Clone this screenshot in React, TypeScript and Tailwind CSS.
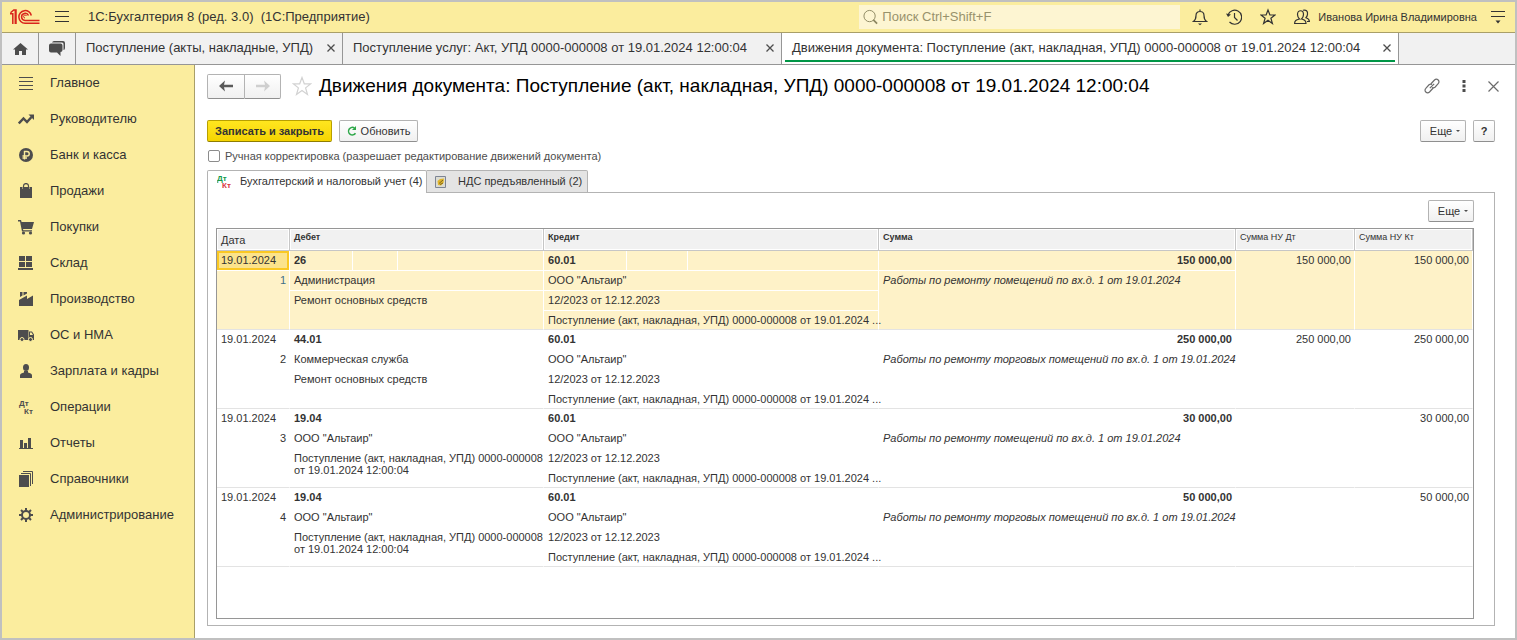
import { useState } from "react";
import type { ReactNode } from "react";
import clsx from "clsx";

type MenuItem = { label: string; icon: ReactNode };

const MENU: MenuItem[] = [
  {
    label: "Главное",
    icon: <path d="M1 2.500h14M1 6.500h14M1 10.500h14M1 14.500h14" stroke="#4d4d4d" />,
  },
  {
    label: "Руководителю",
    icon: (
      <>
        <path d="M.8 12.500 5.500 7.500 9 11 13.500 6" fill="none" stroke="#4d4d4d" strokeWidth="2.400" />
        <path d="M10.500 3.500H16V9z" />
      </>
    ),
  },
  {
    label: "Банк и касса",
    icon: (
      <>
        <circle cx="8" cy="8" r="7" />
        <path d="M6.500 12.500v-8H9a2.200 2.200 0 0 1 0 4.500H4.500M4.500 11H9" fill="none" stroke="#fbed9e" strokeWidth="1.400" />
      </>
    ),
  },
  {
    label: "Продажи",
    icon: (
      <>
        <path d="M2 4h2.500v2h1V4h5v2h1V4H14v11H2z" />
        <path d="M5.500 6V3C5.500-.3 10.500-.3 10.500 3V6" fill="none" stroke="#4d4d4d" strokeWidth="1.200" />
      </>
    ),
  },
  {
    label: "Покупки",
    icon: (
      <>
        <path d="M0 1h3l.6 2H16l-2 7H5l.3 1.200H14v1.300H4L2 2.500H0z" />
        <circle cx="5.500" cy="14" r="1.600" />
        <circle cx="12.500" cy="14" r="1.600" />
      </>
    ),
  },
  {
    label: "Склад",
    icon: <path d="M1 1h6v5H1zM8 1h6v5H8zM1 7h6v5H1zM8 7h6v5H8zM0 13h15v2H0z" />,
  },
  {
    label: "Производство",
    icon: <path d="M1 15V9l8-4.500V8l6-3.500V15zM2 1h2.500v3.500L2 6zM5.500 1H9v1.500L5.500 4.500z" />,
  },
  {
    label: "ОС и НМА",
    icon: (
      <>
        <path d="M0 3h10.500v10H0zM11 4.500h3l2 3V13h-5z" />
        <path d="M12 5.500h1.500L15 8h-3z" fill="#fbed9e" />
        <circle cx="4" cy="12.500" r="2" stroke="#fbed9e" />
        <circle cx="12.500" cy="12.500" r="2" stroke="#fbed9e" />
      </>
    ),
  },
  {
    label: "Зарплата и кадры",
    icon: (
      <>
        <ellipse cx="8" cy="4.500" rx="3" ry="3.500" />
        <path d="M2 15v-2.500C2 10.500 4 10 6 9.500V8h4v1.500c2 .5 4 1 4 3V15z" />
      </>
    ),
  },
  {
    label: "Операции",
    icon: (
      <g fontFamily="Liberation Sans, sans-serif" fontSize="8" fontWeight="700">
        <text x="1" y="7">Дт</text>
        <text x="6" y="15">Кт</text>
      </g>
    ),
  },
  {
    label: "Отчеты",
    icon: <path d="M2 5h3v8H2zM6 8h3v5H6zM10 3h3v10h-3zM1 13h14v1H1z" />,
  },
  {
    label: "Справочники",
    icon: (
      <>
        <path d="M1 4h10v12H1z" />
        <path d="M3 2.500h9.500V15M5 .5h9.500V13" fill="none" stroke="#4d4d4d" />
      </>
    ),
  },
  {
    label: "Администрирование",
    icon: (
      <>
        <circle cx="8" cy="8" r="4" fill="none" stroke="#4d4d4d" strokeWidth="2" />
        <path
          d="M8 1v3M8 12v3M1 8h3M12 8h3M3 3l2.200 2.200M10.800 10.800 13 13M13 3l-2.200 2.200M5.200 10.800 3 13"
          stroke="#4d4d4d"
          strokeWidth="2"
        />
      </>
    ),
  },
];

const DOCUMENT_TITLE =
  "Движения документа: Поступление (акт, накладная, УПД) 0000-000008 от 19.01.2024 12:00:04";

const WINDOW_TABS = [
  { title: "Поступление (акты, накладные, УПД)", width: "w-[267px]" },
  { title: "Поступление услуг: Акт, УПД 0000-000008 от 19.01.2024 12:00:04", width: "w-[439px]" },
  { title: DOCUMENT_TITLE, width: "w-[617px]" },
];

type Entry = {
  debit: string;
  debitLines: [string, string];
  amount: string;
  comment: string;
  taxDt: string;
};

const ENTRIES: Entry[] = [
  {
    debit: "26",
    debitLines: ["Администрация", "Ремонт основных средств"],
    amount: "150 000,00",
    comment: "Работы по ремонту помещений по вх.д. 1 от 19.01.2024",
    taxDt: "150 000,00",
  },
  {
    debit: "44.01",
    debitLines: ["Коммерческая служба", "Ремонт основных средств"],
    amount: "250 000,00",
    comment: "Работы по ремонту торговых помещений по вх.д. 1 от 19.01.2024",
    taxDt: "250 000,00",
  },
  {
    debit: "19.04",
    debitLines: ['ООО "Альтаир"', "Поступление (акт, накладная, УПД) 0000-000008\nот 19.01.2024 12:00:04"],
    amount: "30 000,00",
    comment: "Работы по ремонту помещений по вх.д. 1 от 19.01.2024",
    taxDt: "",
  },
  {
    debit: "19.04",
    debitLines: ['ООО "Альтаир"', "Поступление (акт, накладная, УПД) 0000-000008\nот 19.01.2024 12:00:04"],
    amount: "50 000,00",
    comment: "Работы по ремонту торговых помещений по вх.д. 1 от 19.01.2024",
    taxDt: "",
  },
];

const buttonClass =
  "flex h-[22px] items-center justify-center rounded-xs border border-[#b3b3b3] border-b-[#8f8f8f] bg-linear-to-b from-white to-[#f0f0f0] text-[11px] text-[#333]";

function Logo() {
  return (
    <svg width="30" height="16" viewBox="0 0 30 16" fill="none" stroke="#d9241c" strokeWidth="1.500" aria-label="1С">
      <path d="M0 4.800h2.800V15M0.500 3.800 3.800 1h2.200V15M5.300 1.500V15" />
      <path d="M21.300 6.500A6.300 6.300 0 1 0 15 14.200H29.500" />
      <path d="M18.500 6.500A3.600 3.600 0 1 0 15 11.500H29.500" />
      <path d="M16.500 7a1.500 1.500 0 1 0-1.500 2" strokeWidth="1" />
    </svg>
  );
}

function TopBar() {
  return (
    <header className="flex h-[31px] shrink-0 items-center border-b border-[#a99f68] bg-[#fbed9e] text-[#333]">
      <div className="flex flex-1 items-center pl-2">
        <Logo />
        <button type="button" aria-label="Меню" className="ml-[15px]">
          <svg width="14" height="12" viewBox="0 0 14 12" stroke="#333">
            <path d="M0 .5h14M0 5.500h14M0 10.500h14" />
          </svg>
        </button>
        <span className="ml-[19px] text-[13px] whitespace-pre">1С:Бухгалтерия 8 (ред. 3.0)  (1С:Предприятие)</span>
      </div>
      <label className="flex h-6 w-[321px] items-center gap-1 bg-[#fdf5d2] pl-1">
        <svg width="16" height="16" viewBox="0 0 16 16" fill="none" stroke="#8c8660">
          <circle cx="7" cy="7" r="6" />
          <path d="m11 11 4 4" strokeWidth="1.800" />
        </svg>
        <input
          type="text"
          aria-label="Поиск"
          placeholder="Поиск Ctrl+Shift+F"
          className="w-full bg-transparent text-[13px] outline-none placeholder:text-[#98926c]"
        />
      </label>
      <div className="flex items-center gap-[18px] pr-2 pl-3">
        <button type="button" aria-label="Уведомления">
          <svg width="16" height="18" viewBox="0 0 16 18" fill="none" stroke="#333" strokeWidth="1.200">
            <path d="M1.500 13.500c2-1.500 2.500-3 2.500-6C4 5 5.500 3.500 8 3.500S12 5 12 7.500c0 3 .5 4.500 2.500 6zM8 3.500V1.500" />
            <path d="M6 15.500h4L8 17.300z" fill="#333" stroke="none" />
          </svg>
        </button>
        <button type="button" aria-label="История">
          <svg width="16" height="18" viewBox="0 0 16 18" fill="none" stroke="#333" strokeWidth="1.200">
            <path d="M2 7A7 7 0 1 1 3.500 14M8.500 5v4.500l3 3" />
            <path d="M0 5.500 2 9l3-2.500z" fill="#333" stroke="none" />
          </svg>
        </button>
        <button type="button" aria-label="Избранное">
          <svg width="16" height="18" viewBox="0 0 16 18" fill="none" stroke="#333" strokeWidth="1.200">
            <path d="m8 2 1.900 5h5.100l-4.100 3.200 1.500 5.300L8 12.300l-4.400 3.200 1.500-5.300L1 7h5.100z" />
          </svg>
        </button>
        <button type="button" aria-label="Пользователь">
          <svg width="16" height="18" viewBox="0 0 16 18" fill="none" stroke="#333" strokeWidth="1.200">
            <path d="M.6 15.500c0-3 1.500-3.500 4.900-4.500C4 9.500 3.500 8 3.500 6.500c0-5 6-5 6 0 0 2-.5 3-2 4.500 2.900 1 4.500 1.500 4.500 4.500z" />
            <path d="M9 2.300c3-1 5 1 4.500 4-.2 1.500-.8 2.500-1.500 3.400 2.500.8 3.400 1.300 3.400 3.800H13" />
          </svg>
        </button>
      </div>
      <span className="text-[11px]">Иванова Ирина Владимировна</span>
      <button type="button" aria-label="Настройки" className="mr-[10px] ml-[14px]">
        <svg width="14" height="14" viewBox="0 0 14 14" stroke="#333">
          <path d="M0 1.500h14M0 6.500h14" />
          <path d="M4.500 10.500h5L7 13.500z" fill="#333" stroke="none" />
        </svg>
      </button>
    </header>
  );
}

function WindowTabs() {
  const [active, setActive] = useState(2);

  return (
    <nav className="flex h-8 shrink-0 border-b border-[#969696] bg-[#f1f1f1] text-[#333]">
      <button type="button" aria-label="Начальная страница" className="flex w-[37px] items-center justify-center border-r border-[#969696]">
        <svg width="15" height="12" viewBox="0 0 15 12" fill="#4d4d4d">
          <path d="M7.500 0 15 6.500h-2V12H9V8H6v4H2V6.500H0z" />
        </svg>
      </button>
      <button type="button" aria-label="Обсуждения" className="flex w-[37px] items-center justify-center border-r border-[#969696]">
        <svg width="16" height="15" viewBox="0 0 16 15" fill="#4d4d4d">
          <path d="M5 0h9q2 0 2 2v5q0 2-1.500 2V3q0-1.500-1.500-1.500H3Q3.500 0 5 0z" />
          <path d="M2 2.500h9.500q2 0 2 2v4.500q0 2-2 2v4L8 11.500H2q-2 0-2-2v-5q0-2 2-2z" />
        </svg>
      </button>
      {WINDOW_TABS.map((tab, i) => (
        <div
          key={tab.title}
          className={clsx("flex border-r border-[#969696] px-[3px]", tab.width, i === active && "bg-white")}
        >
          <div
            className={clsx(
              "mb-[2px] flex flex-1 items-center justify-between border-b-2 pt-[3px] pr-1 pl-[7px]",
              i === active ? "border-[#009646]" : "border-transparent",
            )}
          >
            <button type="button" className="text-[13px] whitespace-nowrap" onClick={() => setActive(i)}>
              {tab.title}
            </button>
            <button type="button" aria-label="Закрыть">
              <svg width="8" height="8" viewBox="0 0 8 8" stroke="#4d4d4d" strokeWidth="1.300">
                <path d="m.5.5 7 7M7.500.5l-7 7" />
              </svg>
            </button>
          </div>
        </div>
      ))}
    </nav>
  );
}

function Sidebar() {
  return (
    <aside className="w-[193px] shrink-0 border-r border-[#a99f68] bg-[#fbed9e]">
      <ul>
        {MENU.map((item) => (
          <li key={item.label}>
            <a href="#" className="flex h-9 items-center gap-4 pl-4 text-[13px] text-[#333]">
              <svg width="16" height="16" viewBox="0 0 16 16" fill="#4d4d4d">
                {item.icon}
              </svg>
              {item.label}
            </a>
          </li>
        ))}
      </ul>
    </aside>
  );
}

function MoreButton() {
  return (
    <button type="button" className={clsx(buttonClass, "w-[46px] gap-1 pl-1")}>
      Еще
      <svg width="4" height="2" viewBox="0 0 4 2" fill="#4d4d4d">
        <path d="M0 0h4L2 2z" />
      </svg>
    </button>
  );
}

function EntryRows({ entry, index, selected }: { entry: Entry; index: number; selected: boolean }) {
  const base = "border-r border-b px-1 pt-[3px] align-top leading-3 whitespace-pre";
  const cell = clsx(base, selected ? "border-white bg-[#fef2c8]" : "border-transparent");
  const current = clsx(base, "border-white bg-[#fbe38c] shadow-[inset_0_0_0_2px_#fac823]");
  const last = clsx(cell, "border-b-[#e3e3e3]");
  const right = clsx(last, "pr-[3px] text-right");

  return (
    <tbody>
      <tr className="h-5">
        <td className={selected ? current : cell}>19.01.2024</td>
        <td className={clsx(cell, "font-bold")}>{entry.debit}</td>
        <td className={cell} />
        <td className={cell} />
        <td className={clsx(cell, "font-bold")}>60.01</td>
        <td className={cell} />
        <td className={cell} />
        <td className={clsx(cell, "pr-[3px] text-right font-bold")}>{entry.amount}</td>
        <td rowSpan={4} className={right}>{entry.taxDt}</td>
        <td rowSpan={4} className={right}>{entry.amount}</td>
      </tr>
      <tr className="h-5">
        <td rowSpan={3} className={clsx(right, selected && "text-[#3f6f86]")}>{index}</td>
        <td colSpan={3} className={cell}>{entry.debitLines[0]}</td>
        <td colSpan={3} className={cell}>ООО "Альтаир"</td>
        <td rowSpan={3} className={clsx(last, "italic")}>{entry.comment}</td>
      </tr>
      <tr className="h-5">
        <td rowSpan={2} colSpan={3} className={last}>{entry.debitLines[1]}</td>
        <td colSpan={3} className={cell}>12/2023 от 12.12.2023</td>
      </tr>
      <tr className="h-[19px]">
        <td colSpan={3} className={last}>Поступление (акт, накладная, УПД) 0000-000008 от 19.01.2024 ...</td>
      </tr>
    </tbody>
  );
}

function EntriesTable() {
  const th =
    "border-r border-b border-[#c6c6c6] bg-[#f1f1f1] px-1 pt-[2px] text-left align-top text-[9px] leading-3 shadow-[inset_0_0_0_1px_#fff]";

  return (
    <div className="flex-1 border border-[#969696] bg-white">
      <table className="w-full table-fixed border-separate border-spacing-0 text-[11px] text-[#333]">
        <colgroup>
          <col className="w-[73px]" />
          <col className="w-[63px]" />
          <col className="w-[45px]" />
          <col className="w-[146px]" />
          <col className="w-[83px]" />
          <col className="w-[61px]" />
          <col className="w-[191px]" />
          <col />
          <col className="w-[119px]" />
          <col className="w-[118px]" />
        </colgroup>
        <thead>
          <tr className="h-[22px]">
            <th className="border-r border-b border-[#c6c6c6] bg-[#f1f1f1] px-1 text-left text-[11px] leading-3 font-normal shadow-[inset_0_0_0_1px_#fff]">
              Дата
            </th>
            <th colSpan={3} className={th}>Дебет</th>
            <th colSpan={3} className={th}>Кредит</th>
            <th className={th}>Сумма</th>
            <th className={clsx(th, "font-normal")}>Сумма НУ Дт</th>
            <th className={clsx(th, "font-normal")}>Сумма НУ Кт</th>
          </tr>
        </thead>
        {ENTRIES.map((entry, i) => (
          <EntryRows key={i} entry={entry} index={i + 1} selected={i === 0} />
        ))}
      </table>
    </div>
  );
}

function DocumentHeader() {
  return (
    <div className="flex h-6 items-center">
      <div className="flex">
        <button type="button" aria-label="Назад" className={clsx(buttonClass, "h-[25px] w-[38px] rounded-r-none")}>
          <svg width="14" height="12" viewBox="0 0 14 12" fill="#5a5a5a">
            <path d="m0 6 6-5.500L5 4.700h9v2.600H5l1 4.200z" />
          </svg>
        </button>
        <button type="button" aria-label="Вперед" className={clsx(buttonClass, "h-[25px] w-9 rounded-l-none border-l-0")}>
          <svg width="14" height="12" viewBox="0 0 14 12" fill="#cfcfcf">
            <path d="M14 6 8 .5l1 4.200H0v2.600h9l-1 4.200z" />
          </svg>
        </button>
      </div>
      <button type="button" aria-label="В избранное" className="mr-[7px] ml-[11px]">
        <svg width="20" height="20" viewBox="0 0 20 20" fill="none" stroke="#d2d2d2" strokeWidth="1.200">
          <path d="m10 1.500 2.300 6.300h6.500l-5.200 4.100 1.900 6.600-5.500-3.900-5.500 3.900 1.900-6.600-5.200-4.100h6.500z" />
        </svg>
      </button>
      <h1 className="flex-1 text-[19px] whitespace-nowrap text-black">{DOCUMENT_TITLE}</h1>
      <div className="-mr-1 flex items-center gap-4 text-[#6b6b6b]">
        <button type="button" aria-label="Ссылка">
          <svg width="16" height="16" viewBox="0 0 16 16" fill="none" stroke="currentColor" strokeWidth="1.200">
            <path d="M6.800 6 10.500 2a2.600 2.600 0 0 1 3.700 3.700L11 9.200q-1.500 1-3 .3M9.200 10 5.500 14a2.600 2.600 0 0 1-3.700-3.700L5 6.800q1.500-1 3-.3M5.800 10.200l4.400-4.400" />
          </svg>
        </button>
        <button type="button" aria-label="Действия" className="px-1.5">
          <svg width="4" height="12" viewBox="0 0 4 12" fill="#4d4d4d">
            <path d="M.5 0h3v3h-3zM.5 4.500h3v3h-3zM.5 9h3v3h-3z" />
          </svg>
        </button>
        <button type="button" aria-label="Закрыть">
          <svg width="11" height="11" viewBox="0 0 11 11" stroke="currentColor" strokeWidth="1.200">
            <path d="m.5.5 10 10M10.500.5l-10 10" />
          </svg>
        </button>
      </div>
    </div>
  );
}

export default function App() {
  const [manual, setManual] = useState(false);

  return (
    <div className="flex min-h-screen flex-col border-2 border-[#c0c0c0] bg-white font-['Liberation_Sans',Arial,sans-serif]">
      <TopBar />
      <WindowTabs />
      <div className="flex flex-1">
        <Sidebar />
        <main className="flex min-w-0 flex-1 flex-col pt-[9px] pr-5 pb-3 pl-3">
          <DocumentHeader />
          <div className="mt-[22px] flex items-center gap-[7px]">
            <button
              type="button"
              className="h-[22px] w-[125px] rounded-xs border border-[#b8a000] border-b-[#8f7d00] bg-linear-to-b from-[#ffe61e] to-[#f5d400] text-[11px] font-bold whitespace-nowrap text-[#333]"
            >
              Записать и закрыть
            </button>
            <button type="button" className={clsx(buttonClass, "w-[79px] gap-1")}>
              <svg width="10" height="10" viewBox="0 0 10 10" fill="none" stroke="#2fa84a" strokeWidth="1.500">
                <path d="M7.500 2A3.800 3.800 0 1 0 8.500 7.300" />
                <path d="M9 0v4H5z" fill="#2fa84a" stroke="none" />
              </svg>
              Обновить
            </button>
            <div className="ml-auto flex gap-[7px]">
              <MoreButton />
              <button type="button" className={clsx(buttonClass, "w-[22px] font-bold")}>
                ?
              </button>
            </div>
          </div>
          <label className="mt-[6px] flex h-4 items-center gap-[5px] pl-px text-[11px] text-[#4d4d4d]">
            <input
              type="checkbox"
              checked={manual}
              onChange={(e) => setManual(e.target.checked)}
              className="size-3 appearance-none rounded-xs border border-[#8c8c8c] bg-white checked:bg-[#fac823]"
            />
            Ручная корректировка (разрешает редактирование движений документа)
          </label>
          <div role="tablist" className="z-10 mt-[6px] -mb-px flex h-[23px] text-[11px] whitespace-nowrap text-[#333]">
            <button
              type="button"
              role="tab"
              aria-selected="true"
              className="flex w-[220px] items-center gap-2 rounded-t-xs border border-b-0 border-[#b3b3b3] bg-white pb-[2px] pl-[9px]"
            >
              <svg width="15" height="15" viewBox="0 0 15 15" fontSize="8" fontWeight="700">
                <text x="0" y="7" fill="#159a4b">Дт</text>
                <text x="5" y="14" fill="#d9363e">Кт</text>
              </svg>
              Бухгалтерский и налоговый учет (4)
            </button>
            <button
              type="button"
              role="tab"
              aria-selected="false"
              className="flex w-[161px] items-center gap-3 rounded-tr-xs border border-l-0 border-[#b3b3b3] bg-[#e4e4e4] pl-2"
            >
              <svg width="11" height="12" viewBox="0 0 11 12">
                <path d="M.5.5h10v11H.5z" fill="#dcdcd2" stroke="#7d8494" />
                <path d="M2.500 5 5 3l4-.5L8.500 7 6 9.500 3 9z" fill="#e0b52c" />
                <path d="M4 7.500 8 4M5 8.500 8 7" stroke="#7d6520" />
              </svg>
              НДС предъявленный (2)
            </button>
          </div>
          <section className="flex flex-1 flex-col border border-[#b3b3b3] pt-[7px] pr-5 pb-[6px] pl-2">
            <div className="mb-[6px] flex justify-end">
              <MoreButton />
            </div>
            <EntriesTable />
          </section>
        </main>
      </div>
    </div>
  );
}
